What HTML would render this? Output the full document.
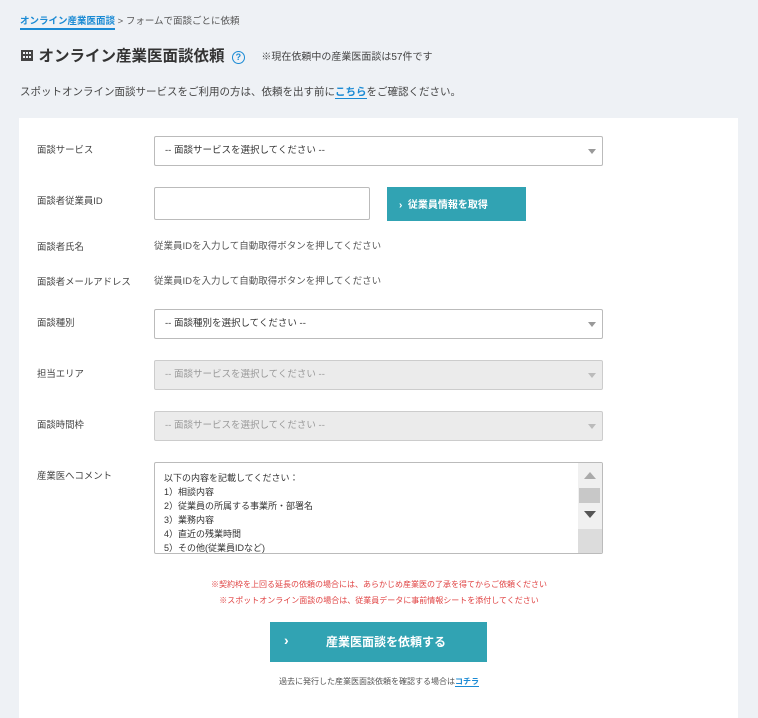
<!DOCTYPE html>
<html><head><meta charset="utf-8"><style>
*{box-sizing:border-box;margin:0;padding:0}
body{width:758px;height:702px;background:#eef1f5;font-family:"Liberation Sans","Noto Sans CJK JP",sans-serif;color:#333;position:relative;overflow:hidden}
.a{position:absolute;white-space:nowrap}
.card{position:absolute;left:19px;top:118px;width:719px;height:600px;background:#fff}
.lbl{position:absolute;left:37px;font-size:9.4px;color:#444;line-height:12px}
.sel{position:absolute;left:154px;width:449px;height:30px;border:1px solid #bbb;border-radius:2px;background:#fff;font-size:9.5px;padding:8px 10px;line-height:12px;color:#333}
.sel:after{content:"";position:absolute;right:6px;top:12px;border-left:4px solid transparent;border-right:4px solid transparent;border-top:5px solid #999}
.dis{background:#ebebeb;border-color:#ccc;color:#999}
.dis:after{border-top-color:#bbb}
.info{position:absolute;left:154px;font-size:9.5px;color:#555;line-height:12px}
.red{position:absolute;left:0;width:758px;text-align:center;font-size:8px;color:#e04444}
</style></head><body>
<div class="a" style="left:20px;top:13px;font-size:9.5px;color:#555"><span style="color:#1a8ad4;font-weight:bold;border-bottom:2px solid #1a8ad4;padding-bottom:1px">オンライン産業医面談</span> &gt; フォームで面談ごとに依頼</div>
<div class="a" style="left:20px;top:44px">
<svg width="14" height="14" viewBox="0 0 14 14" style="vertical-align:-1px"><rect x="1" y="2" width="12" height="11" fill="#444"/><rect x="3" y="4" width="2" height="2" fill="#eef1f5"/><rect x="6" y="4" width="2" height="2" fill="#eef1f5"/><rect x="9" y="4" width="2" height="2" fill="#eef1f5"/><rect x="3" y="8" width="2" height="2" fill="#eef1f5"/><rect x="6" y="8" width="2" height="2" fill="#eef1f5"/><rect x="9" y="8" width="2" height="2" fill="#eef1f5"/></svg>
<span style="font-size:15.5px;font-weight:bold;color:#333">オンライン産業医面談依頼</span>
<span style="display:inline-block;width:13px;height:13px;border:1.5px solid #1a8ad4;border-radius:50%;color:#1a8ad4;font-size:9px;text-align:center;line-height:10px;font-weight:bold;margin-left:3px;vertical-align:1px">?</span>
<span style="font-size:10px;color:#444;margin-left:12px;vertical-align:1px">※現在依頼中の産業医面談は57件です</span></div>
<div class="a" style="left:20px;top:84px;font-size:10.5px;color:#444">スポットオンライン面談サービスをご利用の方は、依頼を出す前に<span style="color:#1a8ad4;border-bottom:1.5px solid #1a8ad4;font-weight:bold">こちら</span>をご確認ください。</div>
<div class="card"></div>
<div class="lbl" style="top:144px">面談サービス</div>
<div class="sel" style="top:136px">-- 面談サービスを選択してください --</div>
<div class="lbl" style="top:195px">面談者従業員ID</div>
<div class="a" style="left:154px;top:187px;width:216px;height:33px;border:1px solid #bbb;border-radius:2px;background:#fff"></div>
<div class="a" style="left:387px;top:187px;width:139px;height:34px;background:#31a3b3;color:#fff;font-size:10px;font-weight:bold;padding:9px 0 0 12px">›&nbsp;&nbsp;従業員情報を取得</div>
<div class="lbl" style="top:241px">面談者氏名</div>
<div class="info" style="top:241px">従業員IDを入力して自動取得ボタンを押してください</div>
<div class="lbl" style="top:276px">面談者メールアドレス</div>
<div class="info" style="top:276px">従業員IDを入力して自動取得ボタンを押してください</div>
<div class="lbl" style="top:317px">面談種別</div>
<div class="sel" style="top:309px">-- 面談種別を選択してください --</div>
<div class="lbl" style="top:368px">担当エリア</div>
<div class="sel dis" style="top:360px">-- 面談サービスを選択してください --</div>
<div class="lbl" style="top:419px">面談時間枠</div>
<div class="sel dis" style="top:411px">-- 面談サービスを選択してください --</div>
<div class="lbl" style="top:470px">産業医へコメント</div>
<div class="a" style="left:154px;top:462px;width:449px;height:92px;border:1px solid #bbb;border-radius:2px;background:#fff;overflow:hidden">
<div style="position:absolute;left:9px;top:8px;font-size:9px;line-height:14px;color:#333">以下の内容を記載してください：<br>1）相談内容<br>2）従業員の所属する事業所・部署名<br>3）業務内容<br>4）直近の残業時間<br>5）その他(従業員IDなど)</div>
<div style="position:absolute;right:0;top:0;width:24px;height:92px;background:#f0f0f0">
<div style="position:absolute;left:6px;top:9px;border-left:6px solid transparent;border-right:6px solid transparent;border-bottom:7px solid #aaa"></div>
<div style="position:absolute;left:1px;top:25px;width:21px;height:15px;background:#c8c8c8"></div>
<div style="position:absolute;left:6px;top:48px;border-left:6px solid transparent;border-right:6px solid transparent;border-top:7px solid #555"></div>
<div style="position:absolute;left:0;top:66px;width:24px;height:26px;background:#dcdcdc"></div>
</div></div>
<div class="red" style="top:579px">※契約枠を上回る延長の依頼の場合には、あらかじめ産業医の了承を得てからご依頼ください</div>
<div class="red" style="top:595px">※スポットオンライン面談の場合は、従業員データに事前情報シートを添付してください</div>
<div class="a" style="left:270px;top:622px;width:217px;height:40px;background:#31a3b3;color:#fff;font-size:12px;font-weight:bold">
<span style="position:absolute;left:14px;top:10px;font-size:14px">›</span><span style="position:absolute;left:56px;top:11px">産業医面談を依頼する</span></div>
<div class="a" style="left:0;width:758px;text-align:center;top:676px;font-size:8px;color:#555">過去に発行した産業医面談依頼を確認する場合は<span style="color:#1a8ad4;font-weight:bold;border-bottom:1.5px solid #1a8ad4">コチラ</span></div>
</body></html>
